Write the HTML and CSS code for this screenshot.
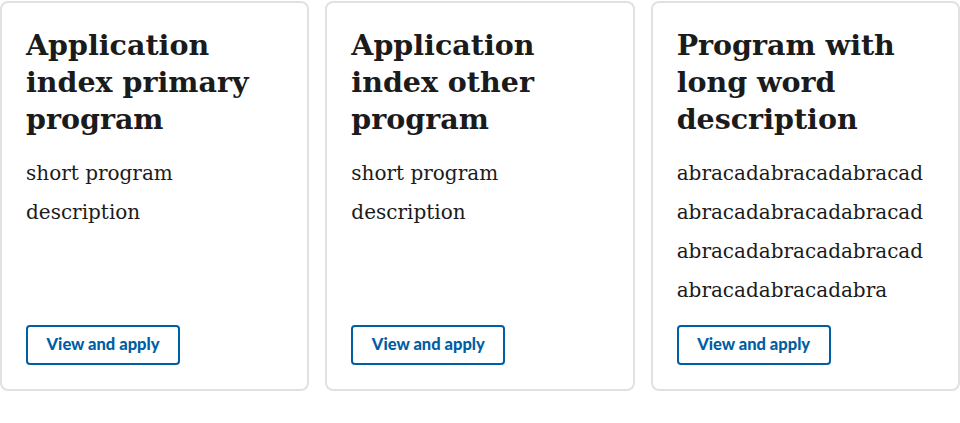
FILE: index.html
```html
<!DOCTYPE html>
<html lang="en">
<head>
<meta charset="utf-8">
<title>Programs</title>
<link rel="stylesheet" href="styles.css">
</head>
<body>
<ul class="card-group">
  <li class="card">
    <div class="card-body">
      <h2 class="card-heading">Application index primary program</h2>
      <p class="card-text">short program description</p>
    </div>
    <div class="card-footer"><a class="btn" href="#">View and apply</a></div>
  </li>
  <li class="card">
    <div class="card-body">
      <h2 class="card-heading">Application index other program</h2>
      <p class="card-text">short program description</p>
    </div>
    <div class="card-footer"><a class="btn" href="#">View and apply</a></div>
  </li>
  <li class="card">
    <div class="card-body">
      <h2 class="card-heading">Program with long word description</h2>
      <p class="card-text long">abracadabracadabracadabracadabracadabracadabracadabracadabracadabracadabracadabra</p>
    </div>
    <div class="card-footer"><a class="btn" href="#">View and apply</a></div>
  </li>
</ul>
</body>
</html>
```

FILE: styles.css
```css
html, body {
  margin: 0;
  padding: 0;
  background: #fff;
}

.card-group {
  list-style: none;
  margin: 0;
  padding: 1px 0 0 0;
  display: grid;
  grid-template-columns: repeat(3, 1fr);
  column-gap: 16px;
  width: 960px;
  box-sizing: border-box;
}

.card {
  border: 2px solid #dfe1e2;
  border-radius: 8px;
  display: flex;
  flex-direction: column;
  padding: 0 24px 24px;
  box-sizing: border-box;
  height: 390px;
}

.card-body {
  flex: 1;
}

.card-heading {
  font-family: "DejaVu Serif", serif;
  font-weight: bold;
  font-size: 28.5px;
  line-height: 37px;
  color: #1b1b1b;
  margin: 24px 0 0;
}

.card-text {
  font-family: "DejaVu Serif", serif;
  font-size: 20px;
  line-height: 39px;
  color: #1b1b1b;
  margin: 16px 0 0;
}

.card-text.long {
  overflow-wrap: anywhere;
}

.card-footer {
  display: flex;
}

.btn {
  display: inline-flex;
  align-items: center;
  justify-content: center;
  height: 40px;
  width: 154px;
  padding-bottom: 3px;
  box-sizing: border-box;
  border: 2px solid #005ea2;
  border-radius: 4px;
  color: #005ea2;
  font-family: Lato, "Liberation Sans", sans-serif;
  font-weight: 900;
  font-size: 16.5px;
  text-decoration: none;
}
```
